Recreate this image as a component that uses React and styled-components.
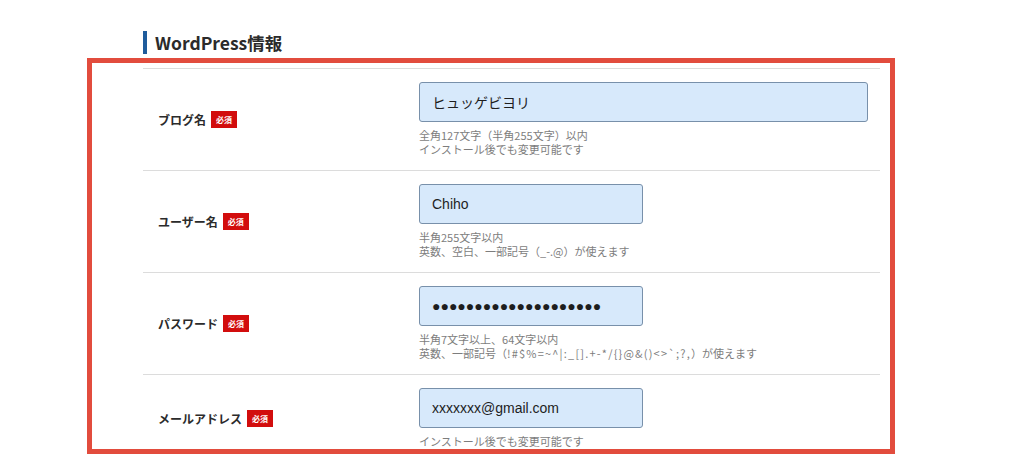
import React from "react";
import styled, { createGlobalStyle } from "styled-components";

const Global = createGlobalStyle`
  html, body { margin: 0; padding: 0; background: #fff; }
  body { font-family: "Liberation Sans", "Noto Sans CJK JP", sans-serif; color: #333; }
`;

const Page = styled.div`
  position: relative;
  width: 1024px;
  min-height: 459px;
`;

const Container = styled.div`
  width: 737px;
  margin: 0 0 0 143px;
  padding-top: 31px;
`;

const Heading = styled.h2`
  margin: 0 0 14px;
  height: 23px;
  display: flex;
  align-items: center;
  gap: 8px;
  font-family: "Noto Sans CJK JP", sans-serif;
  font-size: 17.5px;
  font-weight: 700;
  color: #2b2b2b;
  line-height: 23px;
  &::before {
    content: "";
    display: block;
    width: 4px;
    height: 23px;
    background: #1f5c9c;
  }
`;

const Form = styled.div`
  border-top: 1px solid #dcdcdc;
`;

const Row = styled.div`
  display: grid;
  grid-template-columns: 276px 1fr;
  padding: 13px 0 14px;
  border-bottom: 1px solid #dcdcdc;
`;

const LabelCell = styled.div`
  display: flex;
  align-items: center;
  gap: 5px;
  padding-left: 15px;
  padding-top: 1px;
`;

const Label = styled.span`
  font-family: "Noto Sans CJK JP", sans-serif;
  font-size: 12px;
  font-weight: 700;
  color: #2b2b2b;
`;

const Badge = styled.span`
  display: inline-flex;
  align-items: center;
  justify-content: center;
  width: 26px;
  height: 17px;
  background: #d20d0d;
  color: #fff;
  font-family: "Noto Sans CJK JP", sans-serif;
  font-size: 8px;
  font-weight: 700;
`;

const FieldCell = styled.div`
  display: flex;
  flex-direction: column;
`;

const Input = styled.input`
  box-sizing: border-box;
  width: ${(p) => p.$w}px;
  height: 40px;
  margin: 0;
  padding: 0 12px;
  background: #d7e9fb;
  border: 1px solid #7890aa;
  border-radius: 3px;
  font-family: "Liberation Sans", "Noto Sans CJK JP", sans-serif;
  font-size: 14px;
  color: #1e1e1e;
  outline: none;
`;

const Hints = styled.div`
  margin-top: 6px;
  font-family: "Noto Sans CJK JP", sans-serif;
  font-size: 11px;
  line-height: 14px;
  color: #7d7d7d;
`;

const Symbols = styled.span`
  letter-spacing: 1.2px;
`;

const Annotation = styled.div`
  position: absolute;
  left: 87px;
  top: 58px;
  width: 808px;
  height: 396px;
  box-sizing: border-box;
  border: 5px solid #e24c3d;
  pointer-events: none;
`;

const rows = [
  {
    label: "ブログ名",
    value: "ヒュッゲビヨリ",
    w: 449,
    hints: [["全角127文字（半角255文字）以内"], ["インストール後でも変更可能です"]],
  },
  {
    label: "ユーザー名",
    value: "Chiho",
    w: 224,
    hints: [["半角255文字以内"], ["英数、空白、一部記号（_-.@）が使えます"]],
  },
  {
    label: "パスワード",
    value: "●●●●●●●●●●●●●●●●●●●●",
    w: 224,
    hints: [
      ["半角7文字以上、64文字以内"],
      ["英数、一部記号（", "!#$%=~^|:_[].+-*/{}@&()<>`;?,", "）が使えます"],
    ],
  },
  {
    label: "メールアドレス",
    value: "xxxxxxx@gmail.com",
    w: 224,
    hints: [["インストール後でも変更可能です"]],
  },
];

export default function App() {
  return (
    <Page>
      <Global />
      <Container>
        <Heading>WordPress情報</Heading>
        <Form>
          {rows.map((r) => (
            <Row key={r.label}>
              <LabelCell>
                <Label>{r.label}</Label>
                <Badge>必須</Badge>
              </LabelCell>
              <FieldCell>
                <Input $w={r.w} readOnly value={r.value} />
                <Hints>
                  {r.hints.map((h, i) => (
                    <div key={i}>
                      {h.length === 3 ? (
                        <>
                          {h[0]}
                          <Symbols>{h[1]}</Symbols>
                          {h[2]}
                        </>
                      ) : (
                        h[0]
                      )}
                    </div>
                  ))}
                </Hints>
              </FieldCell>
            </Row>
          ))}
        </Form>
      </Container>
      <Annotation />
    </Page>
  );
}
